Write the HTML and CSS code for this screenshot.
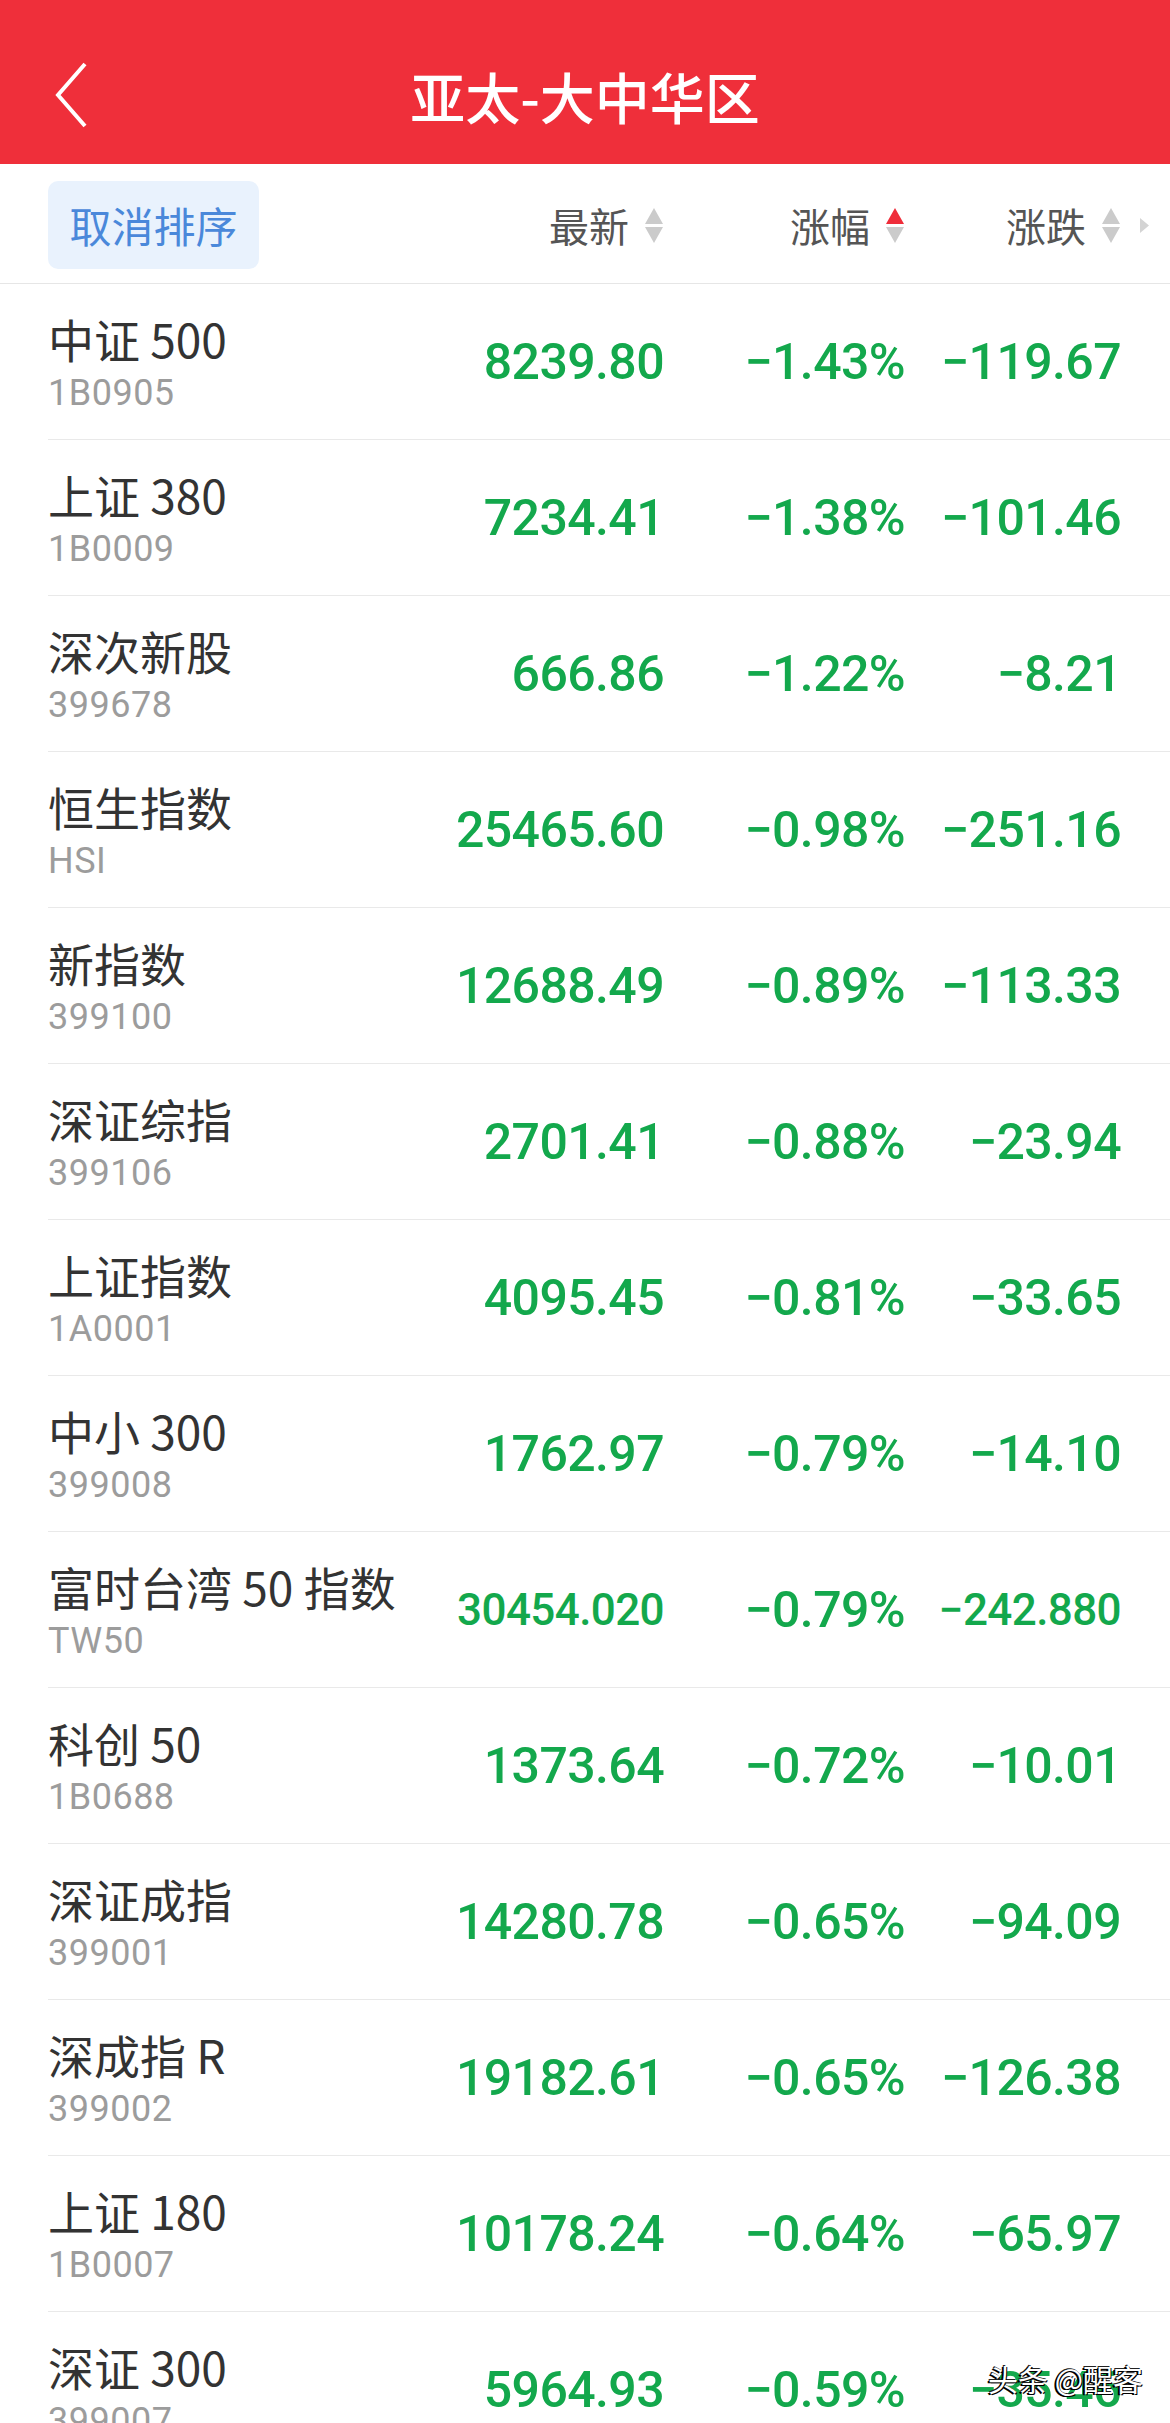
FILE: index.html
```html
<!DOCTYPE html>
<html lang="zh-CN">
<head>
    <meta charset="UTF-8">
    <meta name="viewport" content="width=device-width, initial-scale=1.0">
    <title>亚太-大中华区</title>
    <link rel="stylesheet" href="styles.css">
</head>
<body>

    <div id="topbar">
        <div class="back">
            <svg width="36" height="66" viewBox="0 0 36 66">
                <polyline points="32,2 5,33 32,64" fill="none" stroke="#fff" stroke-width="4" stroke-linejoin="miter"/>
            </svg>
        </div>
        <div class="title">亚太-大中华区</div>
        <div></div>
    </div>

    <div id="sortbar">
        <div class="cancel"><span>取消排序</span></div>
        <div class="col-head">
            <span>最新</span>
            <svg class="arrows" width="20" height="36" viewBox="0 0 20 36">
                <polygon points="1,16 10,0 19,16" fill="#cbcbcb"/>
                <polygon points="1,19 19,19 10,35" fill="#cbcbcb"/>
            </svg>
        </div>
        <div class="col-head">
            <span>涨幅</span>
            <svg class="arrows" width="20" height="36" viewBox="0 0 20 36">
                <polygon points="1,16 10,0 19,16" fill="#ef2d3a"/>
                <polygon points="1,19 19,19 10,35" fill="#cbcbcb"/>
            </svg>
        </div>
        <div class="col-head">
            <span>涨跌</span>
            <svg class="arrows" width="20" height="36" viewBox="0 0 20 36">
                <polygon points="1,16 10,0 19,16" fill="#cbcbcb"/>
                <polygon points="1,19 19,19 10,35" fill="#cbcbcb"/>
            </svg>
        </div>
        <div class="more">
            <svg width="10" height="15" viewBox="0 0 10 15">
                <polygon points="0,0 9,7.5 0,15" fill="#d4d4d4"/>
            </svg>
        </div>
    </div>

    <div id="list">
        <div class="row">
            <div class="name"><div class="cn">中证 500</div><div class="code">1B0905</div></div>
            <div class="num">8239.80</div><div class="num">−1.43%</div><div class="num">−119.67</div>
        </div>
        <div class="row">
            <div class="name"><div class="cn">上证 380</div><div class="code">1B0009</div></div>
            <div class="num">7234.41</div><div class="num">−1.38%</div><div class="num">−101.46</div>
        </div>
        <div class="row">
            <div class="name"><div class="cn">深次新股</div><div class="code">399678</div></div>
            <div class="num">666.86</div><div class="num">−1.22%</div><div class="num">−8.21</div>
        </div>
        <div class="row">
            <div class="name"><div class="cn">恒生指数</div><div class="code">HSI</div></div>
            <div class="num">25465.60</div><div class="num">−0.98%</div><div class="num">−251.16</div>
        </div>
        <div class="row">
            <div class="name"><div class="cn">新指数</div><div class="code">399100</div></div>
            <div class="num">12688.49</div><div class="num">−0.89%</div><div class="num">−113.33</div>
        </div>
        <div class="row">
            <div class="name"><div class="cn">深证综指</div><div class="code">399106</div></div>
            <div class="num">2701.41</div><div class="num">−0.88%</div><div class="num">−23.94</div>
        </div>
        <div class="row">
            <div class="name"><div class="cn">上证指数</div><div class="code">1A0001</div></div>
            <div class="num">4095.45</div><div class="num">−0.81%</div><div class="num">−33.65</div>
        </div>
        <div class="row">
            <div class="name"><div class="cn">中小 300</div><div class="code">399008</div></div>
            <div class="num">1762.97</div><div class="num">−0.79%</div><div class="num">−14.10</div>
        </div>
        <div class="row">
            <div class="name"><div class="cn">富时台湾 50 指数</div><div class="code">TW50</div></div>
            <div class="num small">30454.020</div><div class="num">−0.79%</div><div class="num small">−242.880</div>
        </div>
        <div class="row">
            <div class="name"><div class="cn">科创 50</div><div class="code">1B0688</div></div>
            <div class="num">1373.64</div><div class="num">−0.72%</div><div class="num">−10.01</div>
        </div>
        <div class="row">
            <div class="name"><div class="cn">深证成指</div><div class="code">399001</div></div>
            <div class="num">14280.78</div><div class="num">−0.65%</div><div class="num">−94.09</div>
        </div>
        <div class="row">
            <div class="name"><div class="cn">深成指 R</div><div class="code">399002</div></div>
            <div class="num">19182.61</div><div class="num">−0.65%</div><div class="num">−126.38</div>
        </div>
        <div class="row">
            <div class="name"><div class="cn">上证 180</div><div class="code">1B0007</div></div>
            <div class="num">10178.24</div><div class="num">−0.64%</div><div class="num">−65.97</div>
        </div>
        <div class="row">
            <div class="name"><div class="cn">深证 300</div><div class="code">399007</div></div>
            <div class="num">5964.93</div><div class="num">−0.59%</div><div class="num">−35.46</div>
        </div>
    </div>

    <div class="watermark">头条 @醒客</div>

</body>
</html>
```

FILE: styles.css
```css
body{
    margin: 0;
    background: #fff;
    font-family: "Noto Sans CJK SC", "Noto Sans", sans-serif;
    position: relative;
}
#topbar{
    height: 164px;
    box-sizing: border-box;
    padding-top: 26px;
    background: #ef2f3a;
    display: grid;
    grid-template-columns: 1fr auto 1fr;
    align-items: center;
}
#topbar .back{
    padding-left: 53px;
    display: flex;
    align-items: center;
}
#topbar .title{
    color: #fff;
    font-size: 55px;
    font-weight: 500;
    line-height: 1;
}
#sortbar{
    height: 119px;
    border-bottom: 1px solid #e6e6e6;
    padding-left: 48px;
    display: grid;
    grid-template-columns: 1fr 220px 241px 216px 49px;
    align-items: center;
}
.cancel{
    width: 211px;
    height: 88px;
    margin-top: 2px;
    border-radius: 10px;
    background: #e9f2fd;
    color: #4a88da;
    font-size: 42px;
    display: flex;
    align-items: center;
    justify-content: center;
}
.col-head{
    display: flex;
    justify-content: flex-end;
    align-items: center;
    gap: 15px;
    color: #555;
    font-size: 40px;
    line-height: 1;
}
.col-head span{
    margin-top: 2px;
}
.col-head .arrows{
    margin-top: 4px;
}
.more{
    display: flex;
    padding-left: 19px;
    padding-top: 4px;
}
.row{
    margin-left: 48px;
    height: 155px;
    border-bottom: 1px solid #e9e9e9;
    padding-right: 49px;
    display: grid;
    grid-template-columns: 1fr 220px 241px 216px;
    align-items: center;
}
.name{
    padding-top: 6px;
}
.name .cn{
    color: #333;
    font-size: 46px;
    line-height: 56px;
    white-space: nowrap;
}
.name .code{
    color: #9c9c9c;
    font-family: Roboto, "Noto Sans", sans-serif;
    font-size: 36px;
    letter-spacing: 0.5px;
    line-height: 54px;
}
.num{
    text-align: right;
    color: #13a84c;
    font-family: Roboto, "Noto Sans", sans-serif;
    font-weight: 500;
    font-size: 50px;
    letter-spacing: -0.6px;
    line-height: 1;
}
.num.small{
    font-size: 44px;
}
.watermark{
    position: absolute;
    left: 988px;
    top: 2360px;
    color: #fff;
    font-size: 30px;
    line-height: 1.2;
    text-shadow: -2px 1px 0 #000, 1px 1px 0 #000, -1px -1px 0 #222;
}
```
